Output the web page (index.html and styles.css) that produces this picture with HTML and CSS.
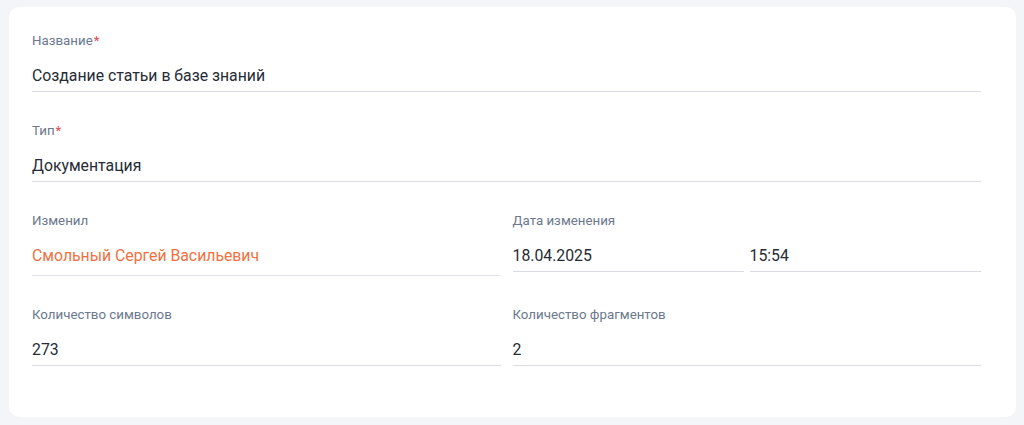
FILE: index.html
```html
<!DOCTYPE html>
<html lang="ru">
<head>
<meta charset="utf-8">
<link rel="stylesheet" href="styles.css">
</head>
<body>
<div class="card">
  <div class="field">
    <div class="label">Название<span class="req">*</span></div>
    <div class="value">Создание статьи в базе знаний</div>
  </div>
  <div class="field">
    <div class="label">Тип<span class="req">*</span></div>
    <div class="value">Документация</div>
  </div>
  <div class="row">
    <div class="field">
      <div class="label">Изменил</div>
      <div class="value user">Смольный Сергей Васильевич</div>
    </div>
    <div class="field">
      <div class="label">Дата изменения</div>
      <div class="datetime">
        <div class="value">18.04.2025</div>
        <div class="value">15:54</div>
      </div>
    </div>
  </div>
  <div class="row">
    <div class="field">
      <div class="label">Количество символов</div>
      <div class="value">273</div>
    </div>
    <div class="field">
      <div class="label">Количество фрагментов</div>
      <div class="value">2</div>
    </div>
  </div>
</div>
</body>
</html>
```

FILE: styles.css
```css
html, body {
  margin: 0;
  padding: 0;
}
body {
  background: #f4f5f9;
  font-family: Roboto, "Liberation Sans", Arial, sans-serif;
  padding: 7px 8px 8px 9px;
  height: 425px;
  box-sizing: border-box;
}
.card {
  background: #ffffff;
  border-radius: 10px;
  height: 410px;
  box-sizing: border-box;
  padding: 26px 35px 0 23px;
  display: flex;
  flex-direction: column;
  gap: 31px;
}
.row {
  display: grid;
  grid-template-columns: 1fr 1fr;
  column-gap: 12px;
  align-items: start;
}
.field {
  display: flex;
  flex-direction: column;
  gap: 17px;
}
.label {
  font-size: 13.3px;
  line-height: 16px;
  color: #6b788d;
}
.req {
  color: #e8474c;
  margin-left: 1px;
}
.value {
  font-size: 15.8px;
  line-height: 20px;
  color: #262b35;
  padding-bottom: 5px;
  border-bottom: 1px solid #d9dce4;
}
.value.user {
  color: #f1703f;
  padding-bottom: 9px;
  border-bottom-color: #e2e4ea;
}
.datetime {
  display: grid;
  grid-template-columns: 231px 1fr;
  column-gap: 6px;
}
```
